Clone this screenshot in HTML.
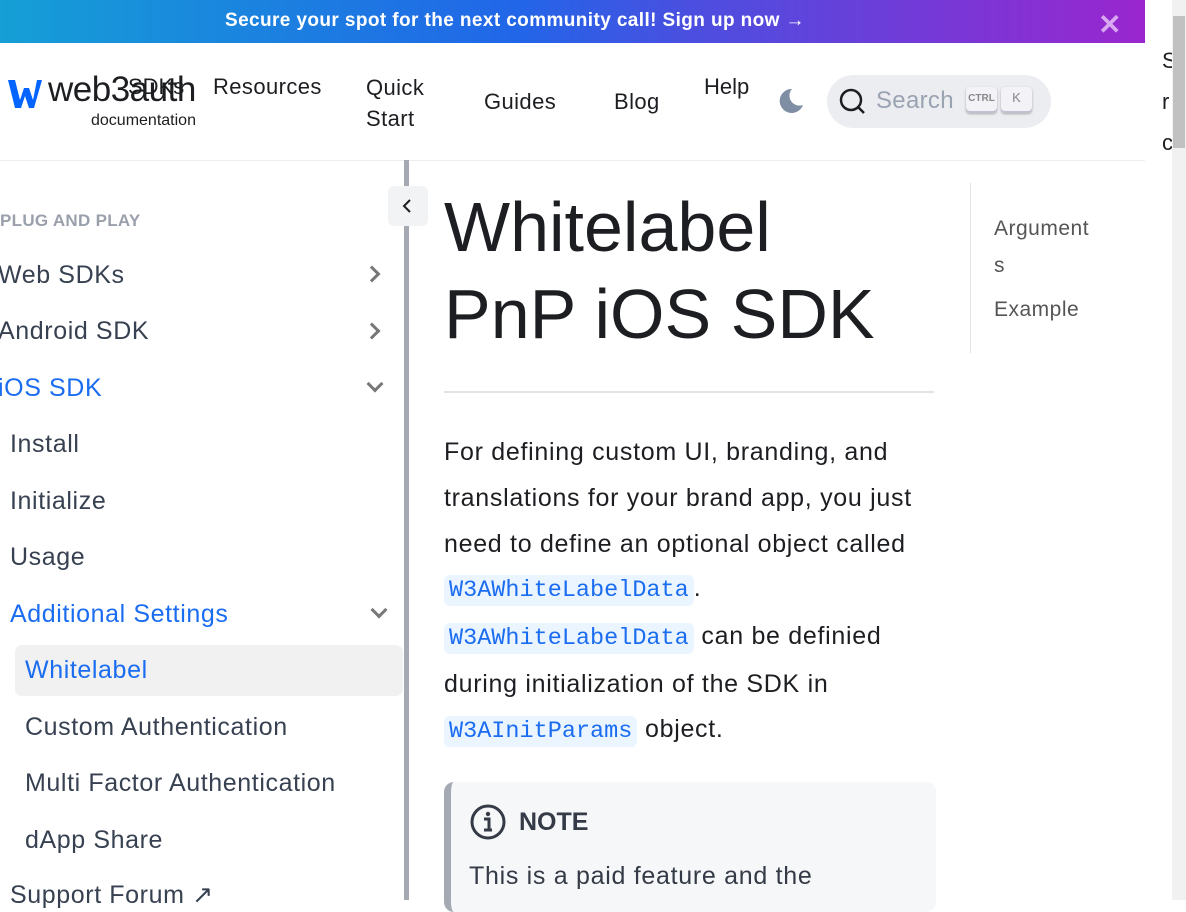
<!DOCTYPE html>
<html><head><meta charset="utf-8"><style>
*{box-sizing:border-box;margin:0;padding:0}
body{width:1186px;height:900px;overflow:hidden;background:#fff;font-family:"Liberation Sans",sans-serif;position:relative;color:#1c1e21}
.a{position:absolute;white-space:nowrap}
.banner{left:0;top:0;width:1145px;height:43px;background:linear-gradient(90deg,#159fd6 0%,#2166e8 45%,#4a4fe0 60%,#9a26cf 100%)}
.nav{font-size:22px;color:#1c1e21}
.side{font-size:25px;letter-spacing:0.6px;color:#374151}
.code{font-family:"Liberation Mono",monospace;color:#1a6cf0;background:#eaf5ff;border-radius:6px;padding:2px 5px;font-size:23.5px;letter-spacing:0}
.p{left:444px;font-size:25px;letter-spacing:0.7px;color:#1c1e21}
.chev{position:absolute;width:12px;height:12px;border-right:3px solid #777;border-bottom:3px solid #777}
</style></head><body>
<div class="a banner"></div>
<div class="a" style="left:225px;top:10px;font-size:19px;font-weight:bold;color:#fff;letter-spacing:0.4px">Secure your spot for the next community call! Sign up now →</div>
<div class="a" style="left:1098px;top:8px;font-size:28px;color:#d8a8f0;font-weight:bold">✕</div>
<div class="a" style="left:0;top:160px;width:1145px;height:1px;background:#eee"></div>
<svg class="a" style="left:8px;top:80px" width="34" height="28" viewBox="0 0 34 28"><path d="M0 0h7l5 20 4-12h5l4 12 4-20h5l-8 28h-5l-4-12-4 12h-6z" fill="#0364ff"/></svg>
<div class="a" style="left:48px;top:70px;font-size:35px;color:#1c1e21;letter-spacing:-0.5px">web3auth</div>
<div class="a" style="left:91px;top:112px;font-size:16px;color:#1c1e21">documentation</div>
<div class="a nav" style="left:128px;top:74px">SDKs</div>
<div class="a nav" style="left:213px;top:74px;letter-spacing:0.4px">Resources</div>
<div class="a nav" style="left:366px;top:72px;line-height:31px;white-space:normal;width:70px;letter-spacing:0.4px">Quick Start</div>
<div class="a nav" style="left:484px;top:89px;letter-spacing:0.4px">Guides</div>
<div class="a nav" style="left:614px;top:89px;letter-spacing:0.4px">Blog</div>
<div class="a nav" style="left:704px;top:74px">Help</div>
<svg class="a" style="left:775px;top:87px" width="30" height="30" viewBox="0 0 30 30"><path d="M17 2a12 12 0 1 0 11 16A10 10 0 0 1 17 2z" fill="#7f8ea3"/></svg>
<div class="a" style="left:827px;top:75px;width:224px;height:53px;border-radius:27px;background:#ebedf0"></div>
<svg class="a" style="left:838px;top:86px" width="32" height="32" viewBox="0 0 32 32"><circle cx="13" cy="14" r="10" fill="none" stroke="#1c1e21" stroke-width="2.5"/><path d="M20 21l6 6" stroke="#1c1e21" stroke-width="2.5"/></svg>
<div class="a" style="left:876px;top:87px;font-size:24px;color:#9aa3b2;letter-spacing:0.3px">Search</div>
<div class="a" style="left:966px;top:87px;width:31px;height:26px;border-radius:4px;background:#f2f2f7;box-shadow:inset 0 -2px 0 #c0c0d0,0 1px 2px #aaa;font-size:10px;color:#888;text-align:center;line-height:24px;font-weight:bold">CTRL</div>
<div class="a" style="left:1001px;top:87px;width:31px;height:26px;border-radius:4px;background:#f2f2f7;box-shadow:inset 0 -2px 0 #c0c0d0,0 1px 2px #aaa;font-size:13px;color:#888;text-align:center;line-height:22px">K</div>
<div class="a" style="left:1162px;top:40px;font-size:22px;color:#1c1e21;line-height:41px;white-space:normal">S<br>r<br>c</div>
<div class="a" style="left:1172px;top:0;width:14px;height:900px;background:#f1f1f1"></div>
<div class="a" style="left:1173px;top:16px;width:12px;height:132px;background:#c1c1c1"></div>
<div class="a" style="left:404px;top:160px;width:5px;height:740px;background:#a5a9b2"></div>
<div class="a" style="left:388px;top:186px;width:40px;height:40px;border-radius:6px;background:#f2f3f5"></div>
<svg class="a" style="left:398px;top:196px" width="20" height="20" viewBox="0 0 20 20"><path d="M12 4l-6 6 6 6" fill="none" stroke="#1c1e21" stroke-width="2"/></svg>
<div class="a" style="left:0;top:211px;font-size:17px;font-weight:bold;color:#9aa0ab;letter-spacing:0.3px">PLUG AND PLAY</div>
<div class="a side" style="left:-2px;top:261px">Web SDKs</div>
<div class="a side" style="left:-2px;top:317px">Android SDK</div>
<div class="a side" style="left:-2px;top:374px;color:#1a6cf0">iOS SDK</div>
<div class="chev" style="left:366px;top:268px;transform:rotate(-45deg)"></div>
<div class="chev" style="left:366px;top:325px;transform:rotate(-45deg)"></div>
<div class="chev" style="left:369px;top:378px;transform:rotate(45deg)"></div>
<div class="a side" style="left:10px;top:430px">Install</div>
<div class="a side" style="left:10px;top:487px">Initialize</div>
<div class="a side" style="left:10px;top:543px">Usage</div>
<div class="a side" style="left:10px;top:600px;color:#1a6cf0">Additional Settings</div>
<div class="chev" style="left:373px;top:604px;transform:rotate(45deg)"></div>
<div class="a" style="left:15px;top:645px;width:388px;height:51px;border-radius:7px;background:#f1f1f1"></div>
<div class="a side" style="left:25px;top:656px;color:#1a6cf0">Whitelabel</div>
<div class="a side" style="left:25px;top:713px">Custom Authentication</div>
<div class="a side" style="left:25px;top:769px">Multi Factor Authentication</div>
<div class="a side" style="left:25px;top:826px">dApp Share</div>
<div class="a side" style="left:10px;top:880px">Support Forum ↗</div>
<div class="a" style="left:444px;top:184px;font-size:70px;line-height:87px;color:#1c1e21;white-space:normal;width:520px">Whitelabel<br>PnP iOS SDK</div>
<div class="a" style="left:444px;top:391px;width:490px;height:2px;background:#e3e3e3"></div>
<div class="a p" style="top:438px">For defining custom UI, branding, and</div>
<div class="a p" style="top:484px">translations for your brand app, you just</div>
<div class="a p" style="top:530px">need to define an optional object called</div>
<div class="a p" style="top:574px"><span class="code">W3AWhiteLabelData</span>.</div>
<div class="a p" style="top:622px"><span class="code">W3AWhiteLabelData</span> can be definied</div>
<div class="a p" style="top:670px">during initialization of the SDK in</div>
<div class="a p" style="top:715px"><span class="code">W3AInitParams</span> object.</div>
<div class="a" style="left:444px;top:782px;width:492px;height:130px;border-radius:10px;background:#f6f7f9;border-left:7px solid #a5a9b2"></div>
<svg class="a" style="left:469px;top:803px" width="38" height="38" viewBox="0 0 38 38"><circle cx="19" cy="19" r="16" fill="none" stroke="#343a46" stroke-width="3"/><circle cx="19" cy="11" r="2.2" fill="#343a46"/><path d="M15 16h5v11M15 27h8" fill="none" stroke="#343a46" stroke-width="3"/></svg>
<div class="a" style="left:519px;top:808px;font-size:25px;font-weight:bold;color:#343a46">NOTE</div>
<div class="a" style="left:469px;top:862px;font-size:25px;letter-spacing:0.7px;color:#343a46">This is a paid feature and the</div>
<div class="a" style="left:970px;top:183px;width:1px;height:170px;background:#e3e3e3"></div>
<div class="a" style="left:994px;top:210px;font-size:21px;letter-spacing:0.5px;color:#555;line-height:37px;white-space:normal">Argument<br>s</div>
<div class="a" style="left:994px;top:298px;font-size:21px;letter-spacing:0.5px;color:#555">Example</div>
</body></html>
